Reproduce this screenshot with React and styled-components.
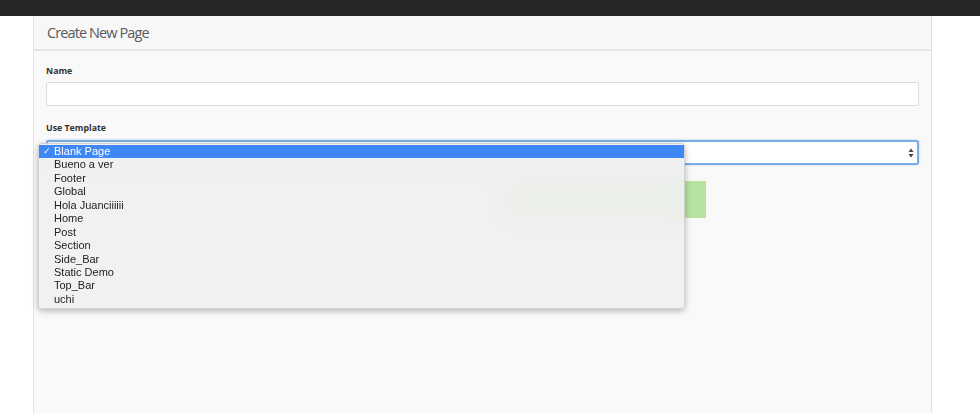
import React from "react";
import styled, { createGlobalStyle } from "styled-components";

const Global = createGlobalStyle`
  html, body { margin: 0; padding: 0; background: #ffffff; height: 100%; }
  #root { height: 100%; }
  * { box-sizing: border-box; }
`;

const Page = styled.div`
  height: 413px;
  display: flex;
  flex-direction: column;
  overflow: hidden;
`;

const TopBar = styled.div`
  height: 16px;
  background: #262626;
  flex: none;
`;

const Panel = styled.div`
  margin-left: 33px;
  width: 899px;
  flex: 1;
  background: #f9f9f9;
  border-left: 1px solid #e3e3e3;
  border-right: 1px solid #e3e3e3;
`;

const Header = styled.div`
  height: 35px;
  padding-left: 13px;
  display: flex;
  align-items: center;
  background: #f7f7f7;
  border-bottom: 2px solid #e6e6e6;
  font-family: "Open Sans", sans-serif;
  font-size: 14.5px;
  font-weight: 500;
  letter-spacing: -0.9px;
  color: #5a5a5a;
`;

const Body = styled.div`
  padding: 14px 12px 0 12px;
  display: flex;
  flex-direction: column;
  font-family: "Open Sans", sans-serif;
`;

const Label = styled.label`
  font-size: 8.8px;
  font-weight: 700;
  color: #333333;
  line-height: 12px;
  margin-bottom: ${(p) => p.$gap || 5}px;
`;

const TextInput = styled.div`
  height: 24px;
  background: #ffffff;
  border: 1px solid #dddddd;
  border-radius: 2px;
  margin-bottom: 16px;
`;

const SelectWrap = styled.div`
  position: relative;
  height: 25px;
  background: #ffffff;
  border: 2px solid #7aaee8;
  border-radius: 3px;
  box-shadow: 0 0 2px rgba(90, 150, 230, 0.6);
`;

const Arrows = styled.svg`
  position: absolute;
  right: 3px;
  top: 6px;
`;

const Menu = styled.ul`
  position: absolute;
  left: -10px;
  top: 1px;
  width: 647px;
  margin: 0;
  padding: 1px 0 2px 0;
  list-style: none;
  background: rgba(239, 239, 239, 0.9);
  backdrop-filter: blur(14px);
  border: 1px solid rgba(0, 0, 0, 0.12);
  border-radius: 4px;
  box-shadow: 0 2px 6px rgba(0, 0, 0, 0.28);
  z-index: 10;
  font-family: "Liberation Sans", Arial, sans-serif;
  font-size: 11px;
`;

const Item = styled.li`
  position: relative;
  height: 13.45px;
  line-height: 13.45px;
  padding-left: 15px;
  color: ${(p) => (p.$active ? "#ffffff" : "#222222")};
  background: ${(p) => (p.$active ? "#3d88f6" : "transparent")};
`;

const Check = styled.span`
  position: absolute;
  left: 4px;
  top: 0;
  font-size: 9px;
`;

const GreenButton = styled.div`
  margin-top: 16px;
  margin-left: 459px;
  width: 201px;
  height: 37px;
  background: #b6e3a0;
`;

const items = [
  "Blank Page",
  "Bueno a ver",
  "Footer",
  "Global",
  "Hola Juanciiiiii",
  "Home",
  "Post",
  "Section",
  "Side_Bar",
  "Static Demo",
  "Top_Bar",
  "uchi",
];

export default function App() {
  return (
    <Page>
      <Global />
      <TopBar />
      <Panel>
        <Header>Create New Page</Header>
        <Body>
          <Label>Name</Label>
          <TextInput />
          <Label $gap={6}>Use Template</Label>
          <SelectWrap>
            <Arrows width="6" height="10" viewBox="0 0 6 10">
              <path d="M3 0.5 L5.5 4 H0.5 Z" fill="#444" />
              <path d="M3 9.5 L5.5 6 H0.5 Z" fill="#444" />
            </Arrows>
            <Menu>
              {items.map((t, i) => (
                <Item key={t} $active={i === 0}>
                  {i === 0 && <Check>✓</Check>}
                  {t}
                </Item>
              ))}
            </Menu>
          </SelectWrap>
          <GreenButton />
        </Body>
      </Panel>
    </Page>
  );
}
